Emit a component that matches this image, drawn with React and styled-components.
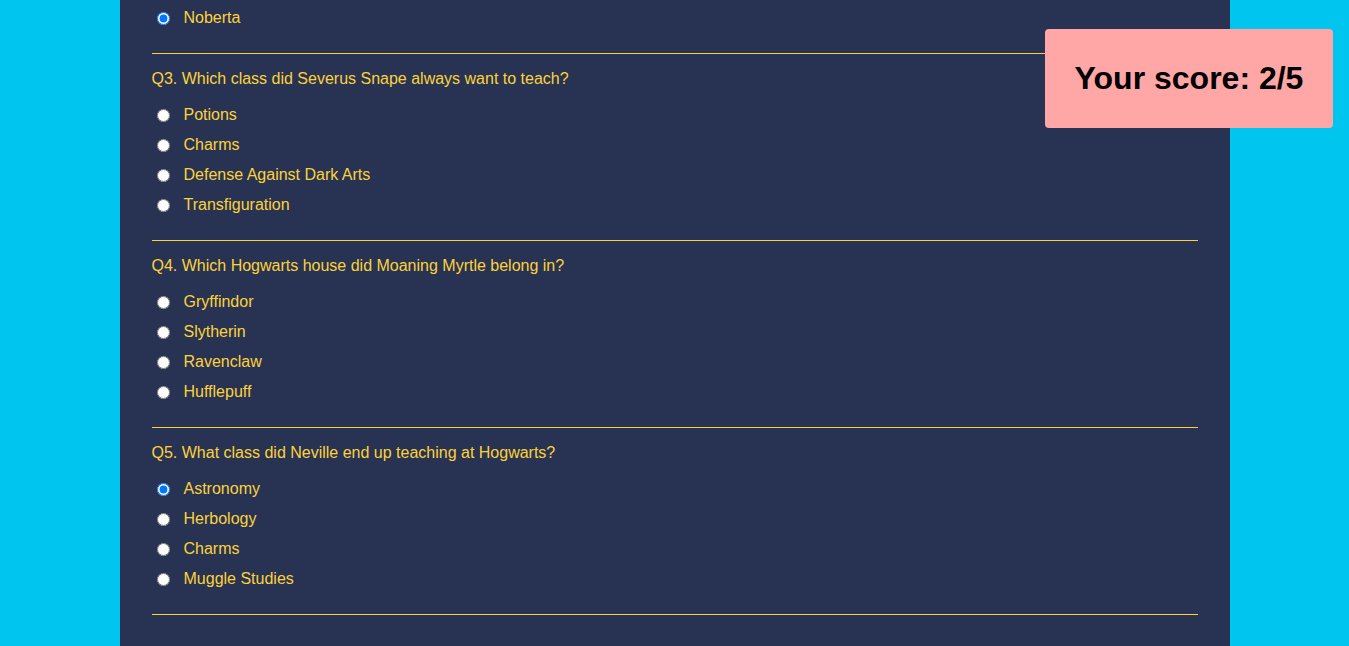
import React from "react";
import styled, { createGlobalStyle } from "styled-components";

const Global = createGlobalStyle`
  html, body { margin: 0; padding: 0; }
  body {
    background: #00c6ef;
    font-family: "Liberation Sans", Arial, sans-serif;
  }
`;

const Page = styled.main`
  width: 1110px;
  margin: 0 auto;
  min-height: 646px;
  box-sizing: border-box;
  background: #283353;
  padding: 2px 32px 40px;
`;

const Options = styled.div`
  display: flex;
  flex-direction: column;
`;

const OptionRow = styled.label`
  display: flex;
  align-items: center;
  box-sizing: border-box;
  height: 30px;
  padding: 2px 0 0 5px;
  color: #fcd23a;
  font-size: 16px;
  gap: 14px;
`;

const Radio = styled.input`
  margin: 0;
  width: 13px;
  height: 13px;
`;

const Divider = styled.hr`
  border: none;
  height: 1px;
  background: #fcd23a;
  margin: 21px 0 0;
`;

const Question = styled.section`
  display: flex;
  flex-direction: column;
`;

const QuestionText = styled.p`
  margin: 16px 0 11px;
  color: #fcd23a;
  font-size: 16px;
  line-height: 18px;
`;

const ScoreBox = styled.div`
  position: fixed;
  top: 29px;
  right: 16px;
  width: 288px;
  height: 99px;
  background: #ffa6a6;
  border-radius: 4px;
  display: flex;
  align-items: center;
  justify-content: center;
  font-size: 32px;
  font-weight: bold;
  color: #000;
`;

const questions = [
  {
    id: "q3",
    text: "Q3. Which class did Severus Snape always want to teach?",
    options: ["Potions", "Charms", "Defense Against Dark Arts", "Transfiguration"],
    checked: null,
  },
  {
    id: "q4",
    text: "Q4. Which Hogwarts house did Moaning Myrtle belong in?",
    options: ["Gryffindor", "Slytherin", "Ravenclaw", "Hufflepuff"],
    checked: null,
  },
  {
    id: "q5",
    text: "Q5. What class did Neville end up teaching at Hogwarts?",
    options: ["Astronomy", "Herbology", "Charms", "Muggle Studies"],
    checked: 0,
  },
];

function OptionList({ name, options, checked }) {
  return (
    <Options>
      {options.map((o, i) => (
        <OptionRow key={o}>
          <Radio type="radio" name={name} defaultChecked={checked === i} />
          {o}
        </OptionRow>
      ))}
    </Options>
  );
}

export default function App() {
  return (
    <>
      <Global />
      <Page>
        <OptionList name="q2" options={["Noberta"]} checked={0} />
        <Divider />
        {questions.map((q) => (
          <Question key={q.id}>
            <QuestionText>{q.text}</QuestionText>
            <OptionList name={q.id} options={q.options} checked={q.checked} />
            <Divider />
          </Question>
        ))}
      </Page>
      <ScoreBox>Your score: 2/5</ScoreBox>
    </>
  );
}
